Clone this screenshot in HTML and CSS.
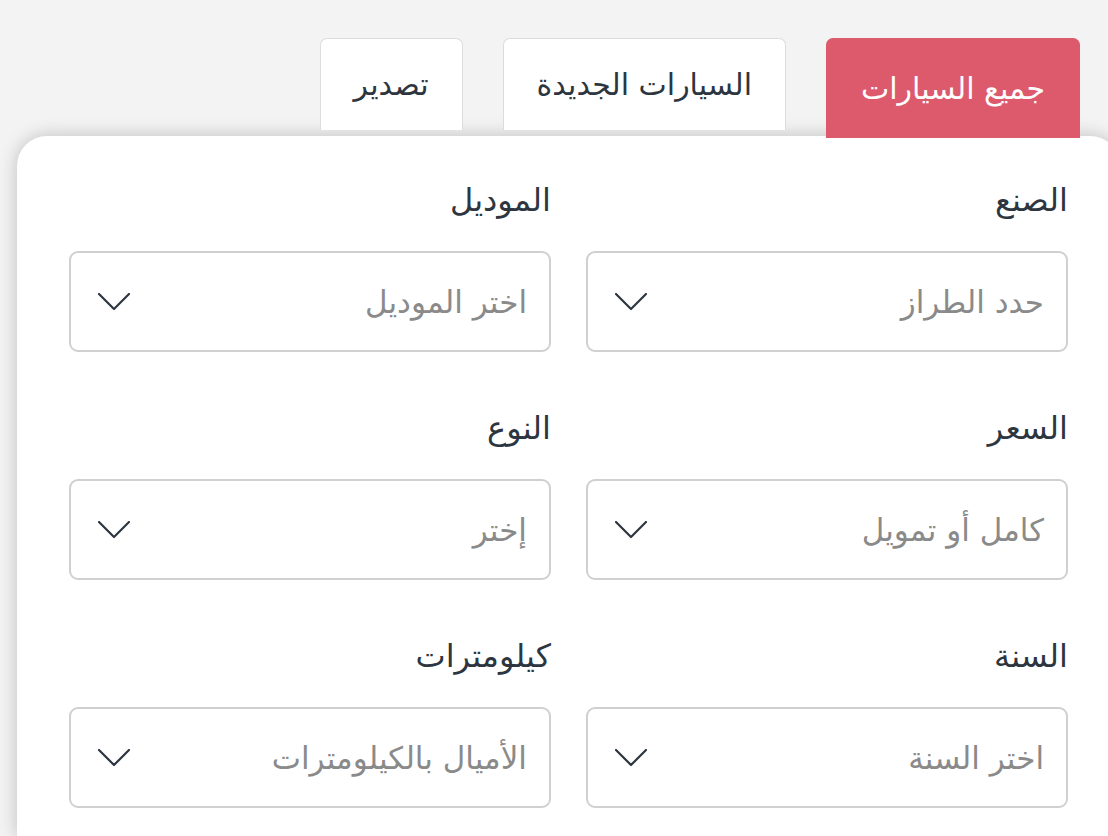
FILE: index.html
```html
<!DOCTYPE html>
<html lang="ar" dir="rtl">
<head>
<meta charset="utf-8">
<title>البحث عن السيارات</title>
<link rel="stylesheet" href="styles.css">
</head>
<body>
<div class="page">
  <nav class="tabs">
    <button class="tab tab-active">جميع السيارات</button>
    <button class="tab">السيارات الجديدة</button>
    <button class="tab">تصدير</button>
  </nav>
  <section class="card">
    <div class="grid">
      <div class="field">
        <label class="label">الصنع</label>
        <div class="select"><span class="placeholder">حدد الطراز</span><svg class="chev" viewBox="0 0 32 18" width="32" height="18"><path d="M1 1 L16 16 L31 1" fill="none" stroke="#2d3640" stroke-width="2.2" stroke-linecap="round" stroke-linejoin="round"/></svg></div>
      </div>
      <div class="field">
        <label class="label">الموديل</label>
        <div class="select"><span class="placeholder">اختر الموديل</span><svg class="chev" viewBox="0 0 32 18" width="32" height="18"><path d="M1 1 L16 16 L31 1" fill="none" stroke="#2d3640" stroke-width="2.2" stroke-linecap="round" stroke-linejoin="round"/></svg></div>
      </div>
      <div class="field">
        <label class="label">السعر</label>
        <div class="select"><span class="placeholder">كامل أو تمويل</span><svg class="chev" viewBox="0 0 32 18" width="32" height="18"><path d="M1 1 L16 16 L31 1" fill="none" stroke="#2d3640" stroke-width="2.2" stroke-linecap="round" stroke-linejoin="round"/></svg></div>
      </div>
      <div class="field">
        <label class="label">النوع</label>
        <div class="select"><span class="placeholder">إختر</span><svg class="chev" viewBox="0 0 32 18" width="32" height="18"><path d="M1 1 L16 16 L31 1" fill="none" stroke="#2d3640" stroke-width="2.2" stroke-linecap="round" stroke-linejoin="round"/></svg></div>
      </div>
      <div class="field">
        <label class="label">السنة</label>
        <div class="select"><span class="placeholder">اختر السنة</span><svg class="chev" viewBox="0 0 32 18" width="32" height="18"><path d="M1 1 L16 16 L31 1" fill="none" stroke="#2d3640" stroke-width="2.2" stroke-linecap="round" stroke-linejoin="round"/></svg></div>
      </div>
      <div class="field">
        <label class="label">كيلومترات</label>
        <div class="select"><span class="placeholder">الأميال بالكيلومترات</span><svg class="chev" viewBox="0 0 32 18" width="32" height="18"><path d="M1 1 L16 16 L31 1" fill="none" stroke="#2d3640" stroke-width="2.2" stroke-linecap="round" stroke-linejoin="round"/></svg></div>
      </div>
    </div>
  </section>
</div>
</body>
</html>
```

FILE: styles.css
```css
* { box-sizing: border-box; }
html, body {
  margin: 0;
  padding: 0;
  background: #f3f3f3;
  height: 100%;
  overflow: hidden;
}
body {
  font-family: "DejaVu Sans", sans-serif;
  color: #2d3640;
}
.page {
  padding-top: 38px;
  padding-left: 17px;
  margin-right: -12px;
}
.tabs {
  display: flex;
  flex-direction: row;
  align-items: flex-start;
  gap: 40px;
  padding-right: 40px;
  position: relative;
  z-index: 2;
  height: 98px;
}
.tab {
  font-family: inherit;
  font-size: 30px;
  color: #2d3640;
  background: #fff;
  border: 1px solid #dcdcdc;
  border-bottom: none;
  border-radius: 7px 7px 0 0;
  height: 92px;
  padding: 0 33px;
  cursor: pointer;
  line-height: 1;
}
.tab-active {
  background: #dd5a6d;
  border-color: #dd5a6d;
  color: #fff;
  height: 100px;
  padding: 0 34px;
}
.card {
  position: relative;
  z-index: 1;
  background: #fff;
  border-radius: 30px 30px 0 0;
  box-shadow: 0 0 18px rgba(0,0,0,0.22);
  padding: 44px 52px 0 52px;
  height: 700px;
}
.grid {
  display: grid;
  grid-template-columns: 1fr 1fr;
  column-gap: 35px;
  row-gap: 56px;
}
.field {
  display: flex;
  flex-direction: column;
  gap: 31px;
}
.label {
  font-size: 32px;
  line-height: 40px;
  height: 40px;
  color: #2d3640;
}
.select {
  height: 101px;
  border: 2px solid #d0d0d0;
  border-radius: 9px;
  display: flex;
  align-items: center;
  justify-content: space-between;
  padding: 0 22px 0 25px;
}
.placeholder {
  font-size: 31px;
  color: #8a8a8a;
}
.chev {
  display: block;
  margin-left: 2px;
}
```
